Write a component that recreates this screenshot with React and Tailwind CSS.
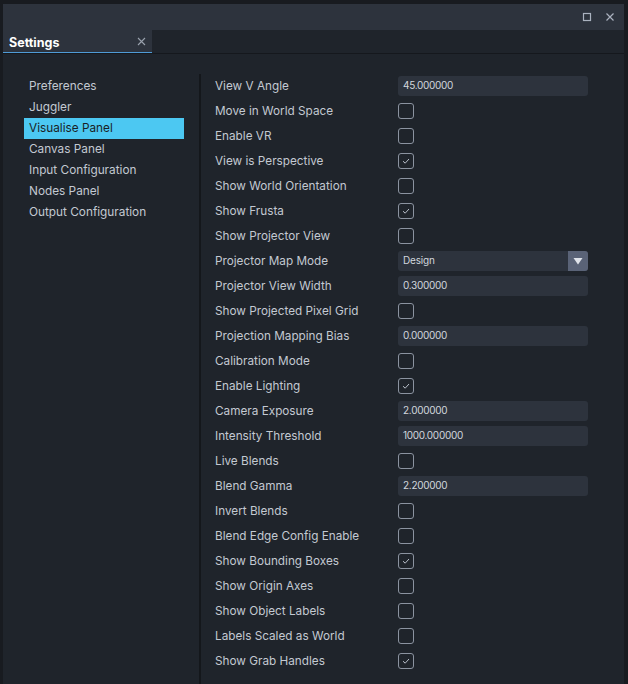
import React from "react";

const nav = ["Preferences", "Juggler", "Visualise Panel", "Canvas Panel", "Input Configuration", "Nodes Panel", "Output Configuration"];

const rows = [
  ["View V Angle", "input", "45.000000"],
  ["Move in World Space", "check", false],
  ["Enable VR", "check", false],
  ["View is Perspective", "check", true],
  ["Show World Orientation", "check", false],
  ["Show Frusta", "check", true],
  ["Show Projector View", "check", false],
  ["Projector Map Mode", "select", "Design"],
  ["Projector View Width", "input", "0.300000"],
  ["Show Projected Pixel Grid", "check", false],
  ["Projection Mapping Bias", "input", "0.000000"],
  ["Calibration Mode", "check", false],
  ["Enable Lighting", "check", true],
  ["Camera Exposure", "input", "2.000000"],
  ["Intensity Threshold", "input", "1000.000000"],
  ["Live Blends", "check", false],
  ["Blend Gamma", "input", "2.200000"],
  ["Invert Blends", "check", false],
  ["Blend Edge Config Enable", "check", false],
  ["Show Bounding Boxes", "check", true],
  ["Show Origin Axes", "check", false],
  ["Show Object Labels", "check", false],
  ["Labels Scaled as World", "check", false],
  ["Show Grab Handles", "check", true],
];

function Check({ on }) {
  return (
    <div className="w-[16px] h-[16px] rounded-[3px] border border-[#8b93a0] flex items-center justify-center">
      {on && (
        <svg width="10" height="10" viewBox="0 0 10 10">
          <path d="M2 5.2 L4.2 7.2 L8 3" fill="none" stroke="#b8bfca" strokeWidth="1" />
        </svg>
      )}
    </div>
  );
}

export default function App() {
  return (
    <div className="w-[628px] h-[684px] bg-[#181b20] pl-[3px] pr-[4px] pt-[4px] flex flex-col" style={{ fontFamily: "Inter, 'Noto Sans', sans-serif" }}>
      <div className="h-[26px] bg-[#2d333d] flex items-center justify-end shrink-0">
        <svg width="10" height="10" viewBox="0 0 10 10" className="mr-[13px]">
          <rect x="1.5" y="1.5" width="7" height="7" fill="none" stroke="#aab2bf" strokeWidth="1.2" />
        </svg>
        <svg width="10" height="10" viewBox="0 0 10 10" className="mr-[9px]">
          <path d="M1.5 1.5 L8.5 8.5 M8.5 1.5 L1.5 8.5" stroke="#aab2bf" strokeWidth="1.2" />
        </svg>
      </div>
      <div className="h-[24px] flex shrink-0 bg-[#1f242b] border-b border-[#15181d]">
        <div className="w-[149px] bg-[#2d333d] border-b border-[#4f9bd6] flex items-center justify-between pl-[6px] pr-[6px] pt-[4px]">
          <span className="text-[12.5px] font-bold text-white">Settings</span>
          <svg width="9" height="9" viewBox="0 0 9 9" className="mb-[3px]">
            <path d="M1 1 L8 8 M8 1 L1 8" stroke="#9aa2ae" strokeWidth="1.1" />
          </svg>
        </div>
      </div>
      <div className="flex-1 flex bg-[#1f242b] min-h-0">
        <div className="w-[196px] pt-[22px] pl-[21px] shrink-0">
          {nav.map((n) => (
            <div
              key={n}
              className={
                "w-[160px] h-[21px] flex items-center pl-[5px] text-[11.8px] " +
                (n === "Visualise Panel" ? "bg-[#4cc8f2] text-[#1a1f26]" : "text-[#c3c9d2]")
              }
            >
              {n}
            </div>
          ))}
        </div>
        <div className="w-[2px] bg-[#14171b] mt-[20px] shrink-0" />
        <div className="pt-[19px] pl-[14px] flex flex-col">
          {rows.map(([label, type, val]) => (
            <div key={label} className="h-[25px] flex items-center">
              <div className="w-[183px] text-[11.75px] text-[#c3c9d2] pt-[2px]">{label}</div>
              {type === "check" && <Check on={val} />}
              {type === "input" && (
                <div className="w-[190px] h-[20px] rounded-[3px] bg-[#2d333d] flex items-center pl-[5px] text-[10px] tracking-[-0.3px] text-[#d2d7de]">
                  {val}
                </div>
              )}
              {type === "select" && (
                <div className="w-[190px] h-[20px] rounded-[3px] bg-[#2d333d] flex items-center text-[10px] tracking-[-0.2px] text-[#d2d7de]">
                  <div className="flex-1 pl-[5px]">{val}</div>
                  <div className="w-[20px] h-[20px] rounded-r-[3px] bg-[#5a6377] flex items-center justify-center">
                    <svg width="10" height="8" viewBox="0 0 10 8">
                      <path d="M0.5 1 L9.5 1 L5 7.5 Z" fill="#dfe3ea" />
                    </svg>
                  </div>
                </div>
              )}
            </div>
          ))}
        </div>
      </div>
    </div>
  );
}
